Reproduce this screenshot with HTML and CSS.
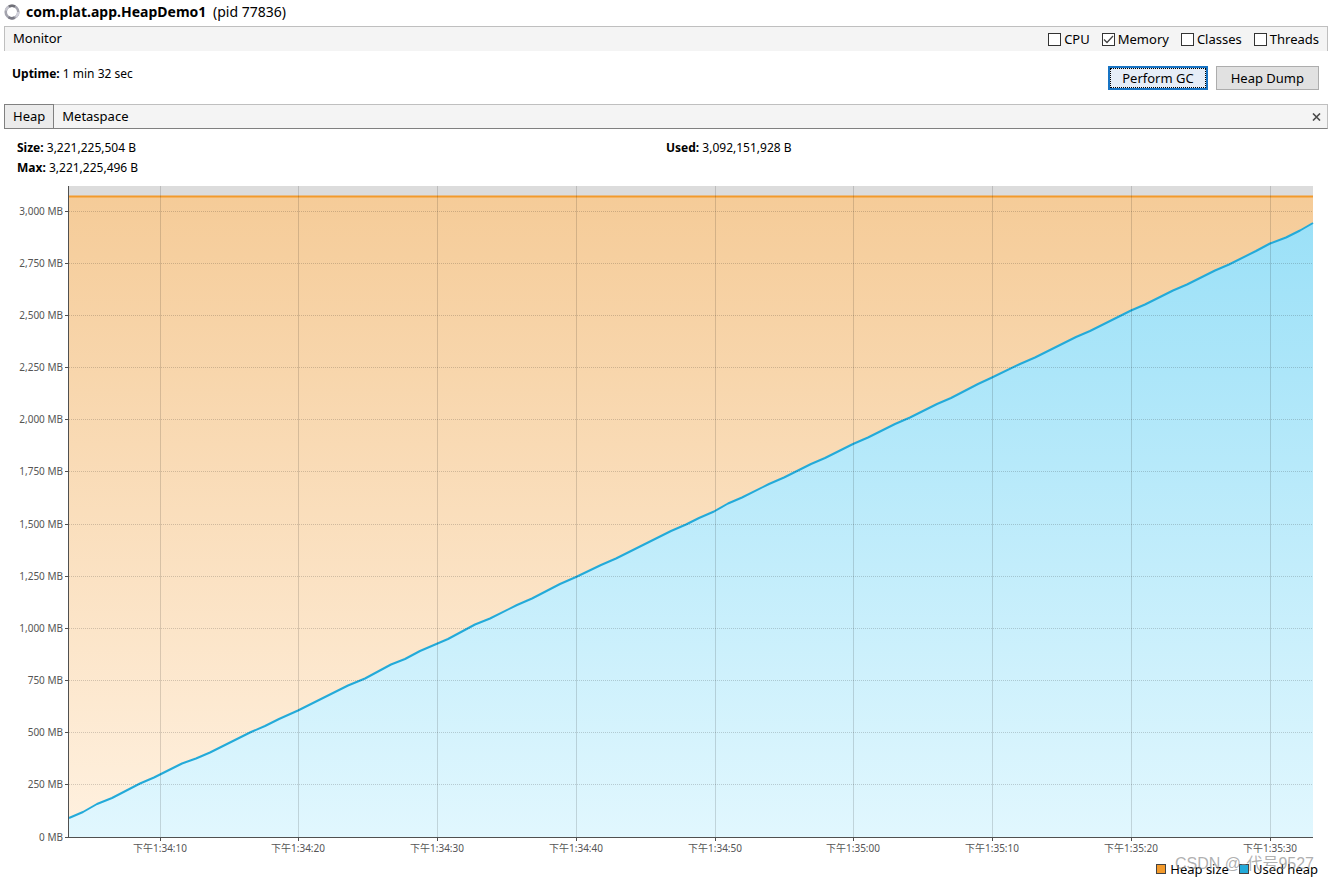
FILE: index.html
```
<!DOCTYPE html>
<html lang="en">
<head>
<meta charset="utf-8">
<meta name="viewport" content="width=device-width, initial-scale=1">
<title>com.plat.app.HeapDemo1</title>
<link rel="stylesheet" href="styles.css">
</head>
<body>
<header class="app-header">
  <svg class="spinner" width="16" height="16" viewBox="0 0 16 16" aria-hidden="true">
    <g fill="none" stroke-width="2.6">
      <circle cx="8" cy="8" r="6.300" stroke="#a4a4ae"/>
      <path d="M1.900 6.500A6.300 6.300 0 0 1 4.500 2.800" stroke="#c6c6ce"/>
      <path d="M5 2.500A6.300 6.300 0 0 1 11 2.500" stroke="#707078"/>
      <path d="M14.300 8A6.300 6.300 0 0 1 11.800 13" stroke="#cfcfd9"/>
      <path d="M10.500 13.800A6.300 6.300 0 0 1 4.500 13.200" stroke="#7b7b86"/>
    </g>
  </svg>
  <h1 class="app-title">com.plat.app.HeapDemo1 <span class="app-pid">(pid 77836)</span></h1>
</header>
<main class="main">
  <section class="monitor-bar">
    <h2 class="bar-title">Monitor</h2>
    <div class="checks">
      <label class="check"><input type="checkbox">CPU</label>
      <label class="check"><input type="checkbox" checked>Memory</label>
      <label class="check"><input type="checkbox">Classes</label>
      <label class="check"><input type="checkbox">Threads</label>
    </div>
  </section>
  <section class="status">
    <p class="uptime"><b>Uptime:</b> 1 min 32 sec</p>
    <div class="actions">
      <button class="btn btn-focus" type="button">Perform GC</button>
      <button class="btn" type="button">Heap Dump</button>
    </div>
  </section>
  <nav class="tabs">
    <button class="tab tab-active" type="button">Heap</button>
    <button class="tab" type="button">Metaspace</button>
    <button class="close" type="button" aria-label="Close">
      <svg width="9" height="8" viewBox="0 0 9 8"><path d="M1 .5 8 7.5M8 .5 1 7.5" stroke="#4a4a4a" stroke-width="1.6"/></svg>
    </button>
  </nav>
  <section class="stats">
    <p><b>Size:</b> 3,221,225,504 B</p>
    <p><b>Used:</b> 3,092,151,928 B</p>
    <p><b>Max:</b> 3,221,225,496 B</p>
  </section>
</main>
<svg class="chart" viewBox="0 180 1330 678" role="img" aria-label="Heap size and used heap over time">
  <defs>
    <linearGradient id="sizeFill" gradientUnits="userSpaceOnUse" x1="0" y1="186" x2="0" y2="837">
      <stop offset="0" stop-color="#f5cb97"/><stop offset="1" stop-color="#fff1e0"/>
    </linearGradient>
    <linearGradient id="usedFill" gradientUnits="userSpaceOnUse" x1="0" y1="186" x2="0" y2="837">
      <stop offset="0" stop-color="#97dff7"/><stop offset="1" stop-color="#e1f7fe"/>
    </linearGradient>
  </defs>
  <rect x="69" y="186" width="1244" height="651" fill="#dcdcdc"/>
  <rect x="69" y="196" width="1244" height="641" fill="url(#sizeFill)"/>
  <path d="M69 196.500H1313" stroke="#f39a2b" stroke-width="2"/>
  <path fill="url(#usedFill)" d="M69 837V818L83 812 97 804 112 798 140 783.500 154 777.500 182 763.500 196 758.500 210 752.500 251 732 265 726 279 719 298 710.500 348 685.500 365 678.500 391 664.500 405 659 420 651 434 645 448 639 475 624.500 490 618.500 517 605 532 598.500 560 584 576 577 601 565 616 558.500 644 544.500 671 531 686 524.500 699 518 714 511.500 728 503.500 742 497.500 769 484 784 477.500 811 464 825 458 853 444 868 437.500 895 424 910 417.500 937 404 951 398 978 384 992 377.500 1020 364 1035 357.500 1076 337 1090 331 1131 310.500 1145 304.500 1173 290.500 1187 284.500 1215 270.500 1229 264.500 1256 251 1270 243.500 1286 237.500 1300 230.500 1313 223V837Z"/>
  <path fill="none" stroke="#23aad9" stroke-width="2" stroke-linejoin="round" d="M69 818L83 812 97 804 112 798 140 783.500 154 777.500 182 763.500 196 758.500 210 752.500 251 732 265 726 279 719 298 710.500 348 685.500 365 678.500 391 664.500 405 659 420 651 434 645 448 639 475 624.500 490 618.500 517 605 532 598.500 560 584 576 577 601 565 616 558.500 644 544.500 671 531 686 524.500 699 518 714 511.500 728 503.500 742 497.500 769 484 784 477.500 811 464 825 458 853 444 868 437.500 895 424 910 417.500 937 404 951 398 978 384 992 377.500 1020 364 1035 357.500 1076 337 1090 331 1131 310.500 1145 304.500 1173 290.500 1187 284.500 1215 270.500 1229 264.500 1256 251 1270 243.500 1286 237.500 1300 230.500 1313 223"/>
  <path class="grid-h" d="M69 211.500H1313M69 263.500H1313M69 315.500H1313M69 367.500H1313M69 419.500H1313M69 471.500H1313M69 524.500H1313M69 576.500H1313M69 628.500H1313M69 680.500H1313M69 732.500H1313M69 784.500H1313"/>
  <path class="grid-v" d="M160.500 186V837M298.500 186V837M437.500 186V837M576.500 186V837M715.500 186V837M853.500 186V837M992.500 186V837M1131.500 186V837M1270.500 186V837"/>
  <path class="axis" d="M68.500 186V837.500H1313M65 211.500h4M65 263.500h4M65 315.500h4M65 367.500h4M65 419.500h4M65 471.500h4M65 524.500h4M65 576.500h4M65 628.500h4M65 680.500h4M65 732.500h4M65 784.500h4M65 837.500h4M160.500 837v4M298.500 837v4M437.500 837v4M576.500 837v4M715.500 837v4M853.500 837v4M992.500 837v4M1131.500 837v4M1270.500 837v4"/>
  <g class="label label-y">
    <text x="63" y="215">3,000 MB</text><text x="63" y="267">2,750 MB</text><text x="63" y="319">2,500 MB</text><text x="63" y="371">2,250 MB</text><text x="63" y="423">2,000 MB</text><text x="63" y="475">1,750 MB</text><text x="63" y="528">1,500 MB</text><text x="63" y="580">1,250 MB</text><text x="63" y="632">1,000 MB</text><text x="63" y="684">750 MB</text><text x="63" y="736">500 MB</text><text x="63" y="788">250 MB</text><text x="63" y="841">0 MB</text>
  </g>
  <g class="label label-x">
    <text x="160" y="852">下午1:34:10</text><text x="298" y="852">下午1:34:20</text><text x="437" y="852">下午1:34:30</text><text x="576" y="852">下午1:34:40</text><text x="715" y="852">下午1:34:50</text><text x="853" y="852">下午1:35:00</text><text x="992" y="852">下午1:35:10</text><text x="1131" y="852">下午1:35:20</text><text x="1270" y="852">下午1:35:30</text>
  </g>
</svg>
<footer class="legend">
  <span class="key"><i class="swatch swatch-size"></i>Heap size</span>
  <span class="key"><i class="swatch swatch-used"></i>Used heap</span>
  <span class="watermark">CSDN @-代号9527</span>
</footer>
</body>
</html>
```
FILE: styles.css
```
* { box-sizing: border-box; }
body {
  margin: 0;
  background: #fff;
  color: #000;
  font: 13px/20px "Noto Sans", "Noto Sans CJK SC", sans-serif;
}
h1, h2, p { margin: 0; font-size: inherit; }
button, input { font: inherit; color: inherit; margin: 0; }
.app-header {
  display: flex;
  align-items: center;
  gap: 6px;
  height: 26px;
  padding: 0 4px 3px;
}
.spinner { flex: none; }
.app-title { font-size: 14px; font-weight: 700; line-height: 20px; }
.app-pid { margin-left: 3px; font-weight: 400; }
.main { padding: 0 2px 0 4px; }
.monitor-bar {
  display: flex;
  justify-content: space-between;
  align-items: flex-start;
  height: 25px;
  padding: 1px 8px 0;
  background: #f4f4f4;
  border: 1px solid #bfbfbf;
  border-bottom: 0;
}
.bar-title { font-weight: 400; }
.checks { display: flex; gap: 12px; padding-top: 1px; }
.check { display: flex; align-items: center; gap: 3px; }
.check input {
  appearance: none;
  width: 13px;
  height: 13px;
  border: 1px solid #333;
  background: #fff;
}
.check input:checked {
  background: url("data:image/svg+xml,%3Csvg xmlns='http://www.w3.org/2000/svg' viewBox='0 0 11 11'%3E%3Cpath d='M1 5.500 4 8.500 10 2' fill='none' stroke='%23444' stroke-width='1.300'/%3E%3C/svg%3E") #fff;
}
.status {
  display: flex;
  justify-content: space-between;
  align-items: flex-start;
  height: 53px;
  padding: 13px 9px 0 8px;
}
.uptime, .stats { font-size: 12px; }
.actions { display: flex; gap: 8px; padding-top: 2px; }
.btn {
  height: 24px;
  padding: 0 14px 1px;
  line-height: 20px;
  background: #e1e1e1;
  border: 1px solid #adadad;
}
.btn-focus {
  background: #e5edf7;
  border: 2px solid #1874c4;
  padding: 0 12px 1px;
  outline: 1px dotted #000;
  outline-offset: -3px;
}
.tabs {
  display: flex;
  height: 25px;
  background: #f4f4f4;
  border: 1px solid #bfbfbf;
  border-bottom-color: #808080;
  border-left: 0;
}
.tab {
  padding: 0 8px 1px;
  background: none;
  border: 0;
}
.tab-active {
  margin-top: -1px;
  background: #ebebeb;
  border: 1px solid #808080;
  border-bottom: 0;
}
.close {
  display: flex;
  align-items: center;
  margin-left: auto;
  padding: 0 6px;
  background: none;
  border: 0;
}
.stats {
  display: grid;
  grid-template-columns: 1fr 1fr;
  padding: 9px 13px 2px;
}
.chart { display: block; width: 100%; height: auto; }
.grid-h { fill: none; stroke: #000; stroke-opacity: .17; stroke-dasharray: 1 1; }
.grid-v { fill: none; stroke: #000; stroke-opacity: .14; }
.axis { fill: none; stroke: #505050; }
.label { fill: #555; font-size: 10px; }
.label-y { text-anchor: end; }
.label-x { text-anchor: middle; }
.legend {
  position: relative;
  display: flex;
  justify-content: flex-end;
  gap: 10px;
  padding: 1px 12px 0;
}
.key { display: flex; align-items: center; gap: 4px; }
.swatch { width: 10px; height: 10px; border: 1px solid #444; }
.swatch-size { background: #f39a2b; }
.swatch-used { background: #23aad9; }
.watermark {
  position: absolute;
  right: 16px;
  top: -6px;
  color: #888a;
  font: 16px/24px "Liberation Sans", "Noto Sans CJK SC", sans-serif;
}
```
